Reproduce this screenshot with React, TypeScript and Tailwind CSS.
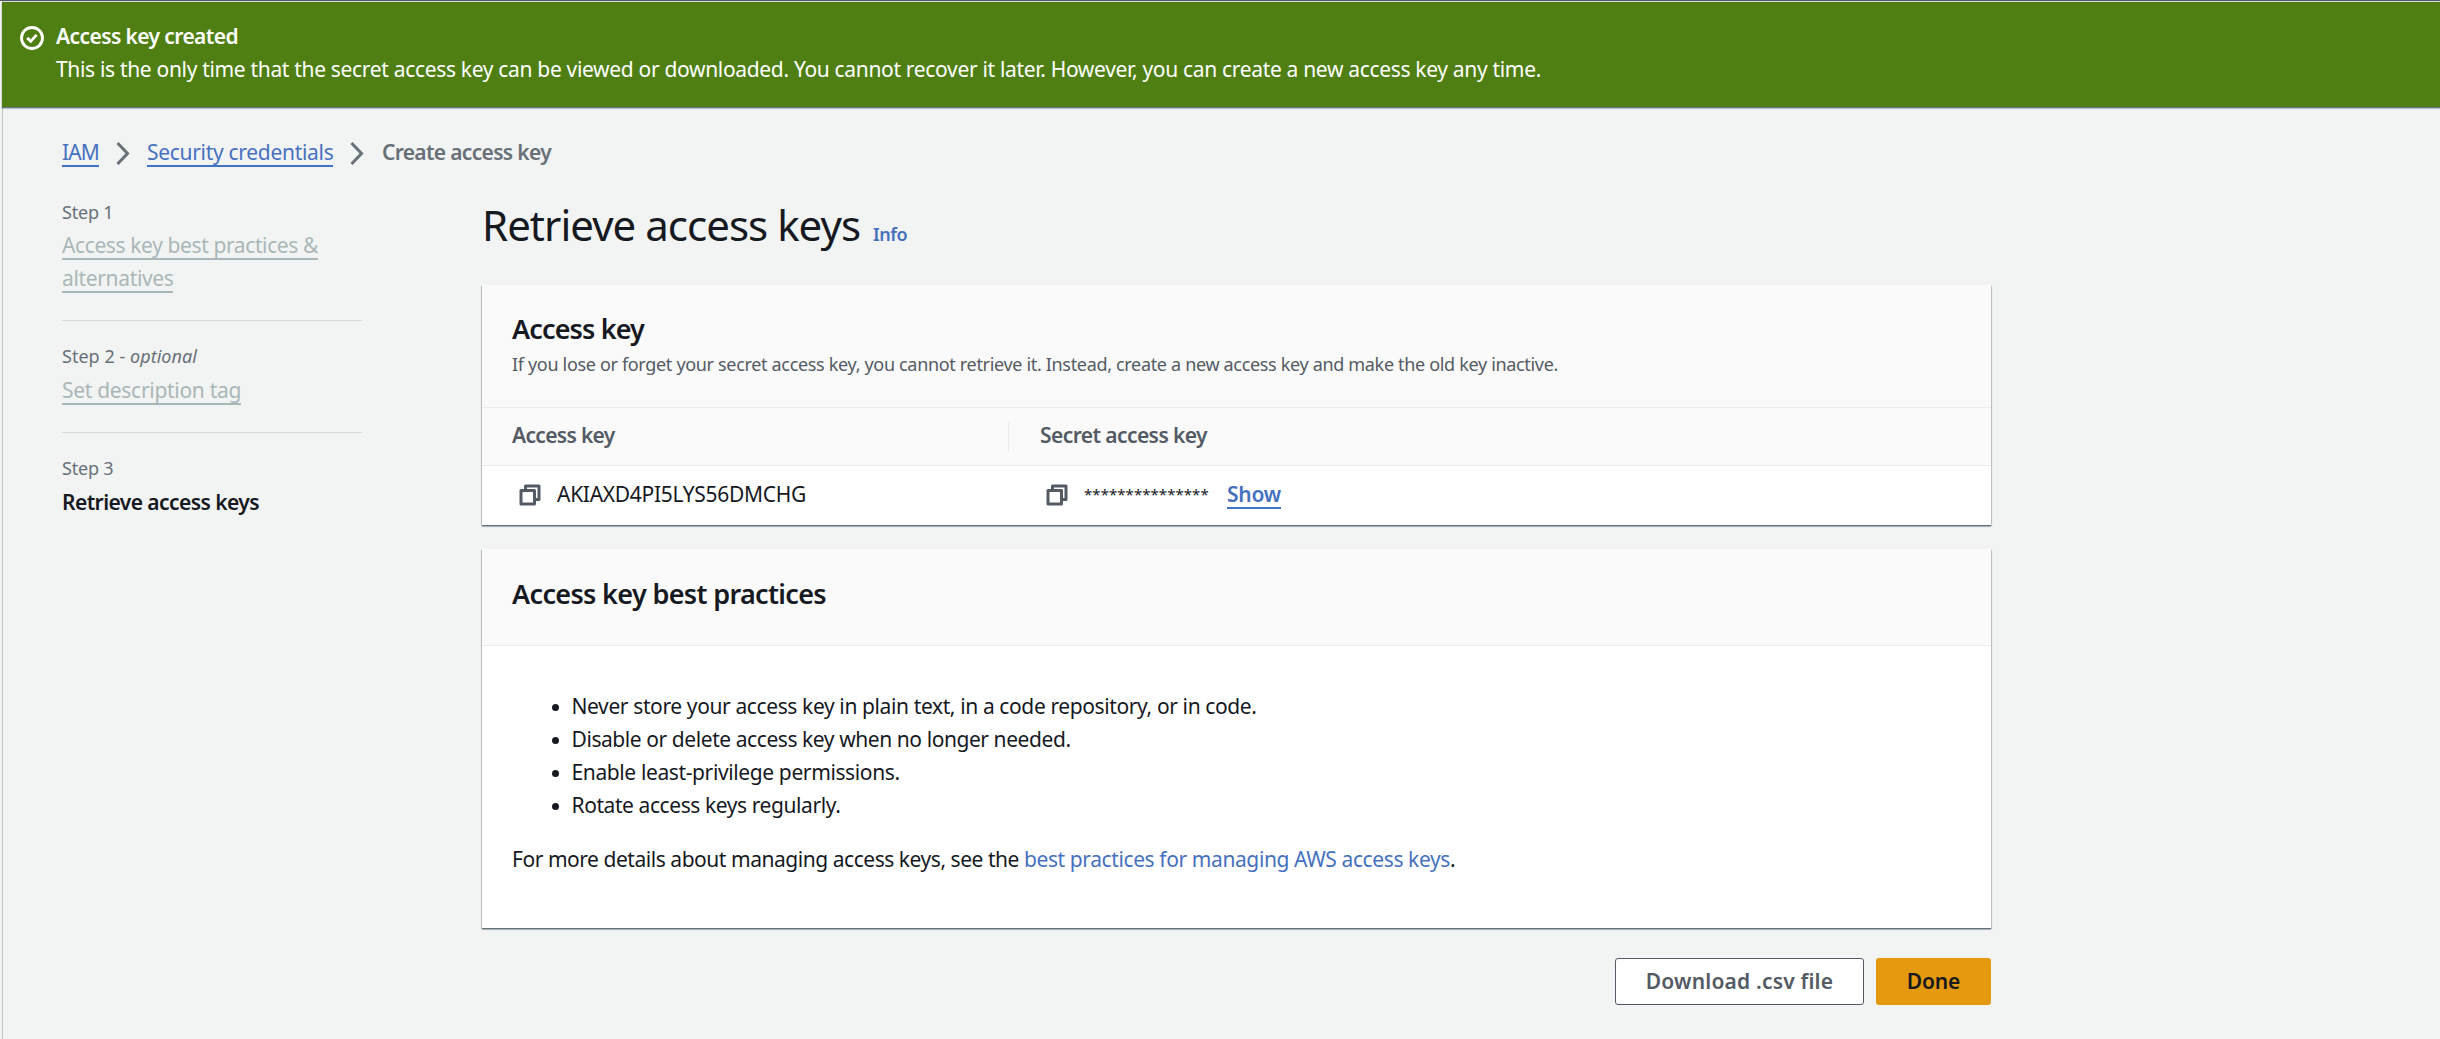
import React from "react";

function Chevron() {
  return (
    <svg className="h-6 w-[14px] shrink-0" viewBox="0 0 14 24" fill="none" stroke="#687078" strokeWidth="3">
      <path d="M1.5 2 L11.5 12.5 L1.5 23" />
    </svg>
  );
}

function CopyIcon() {
  return (
    <svg className="mt-px h-6 w-6 shrink-0" viewBox="0 0 16 16" fill="none" stroke="#545b64" strokeWidth="2" strokeLinejoin="round">
      <path d="M2 5h9v9H2z" />
      <path d="M5 5V2h9v9h-3" />
    </svg>
  );
}

function CheckIcon() {
  return (
    <svg className="mt-[6px] h-6 w-6 shrink-0" viewBox="0 0 16 16" fill="none" stroke="#ffffff" strokeWidth="1.9">
      <circle cx="8" cy="8" r="7" />
      <path d="m4.8 7.9 2.4 2.3 3.9-4.3" />
    </svg>
  );
}

const card =
  "w-[1509px] bg-white shadow-[0_1px_1px_0_rgba(0,28,36,0.3),1px_1px_1px_0_rgba(0,28,36,0.15),-1px_1px_1px_0_rgba(0,28,36,0.15),0_2px_1px_0_rgba(0,28,36,0.2)]";

const practices = [
  { text: "Never store your access key in plain text, in a code repository, or in code.", tracking: "tracking-[-0.385px]" },
  { text: "Disable or delete access key when no longer needed.", tracking: "tracking-[-0.43px]" },
  { text: "Enable least-privilege permissions.", tracking: "tracking-[-0.38px]" },
  { text: "Rotate access keys regularly.", tracking: "tracking-[-0.42px]" },
];

export default function App() {
  return (
    <div className="h-[1039px] w-[2440px] overflow-hidden whitespace-nowrap border-t border-[#545b64] bg-[#f2f3f3] pl-[2px] font-['Noto_Sans',sans-serif] text-[21px] leading-[33px] text-[#16191f]">
      <div className="h-full border-l border-t border-l-[#c4c7c8] border-t-[#d5dbdb]">
        <header className="-ml-px flex h-[105px] gap-[12px] bg-[#4f7f12] pl-[18px] pt-[18px] text-white shadow-[0_1px_1px_0_rgba(0,28,60,0.5),0_2px_1px_0_rgba(0,28,36,0.15)]">
          <CheckIcon />
          <div>
            <div className="font-semibold tracking-[-0.588px]">Access key created</div>
            <div className="tracking-[-0.323px]">
              This is the only time that the secret access key can be viewed or downloaded. You cannot recover it later. However, you can create a new access key any time.
            </div>
          </div>
        </header>

        <nav className="ml-[59px] mt-[29px] flex h-[33px] items-center">
          <a className="relative h-[33px] w-[37px] tracking-[-0.86px] text-[#4671bf] after:absolute after:inset-x-0 after:bottom-[2px] after:h-[2px] after:bg-[#4173c4]">IAM</a>
          <span className="ml-[17px] flex"><Chevron /></span>
          <a className="relative ml-[17px] h-[33px] w-[186px] tracking-[-0.3px] text-[#4671bf] after:absolute after:inset-x-0 after:bottom-[2px] after:h-[2px] after:bg-[#4173c4]">Security credentials</a>
          <span className="ml-[17px] flex"><Chevron /></span>
          <span className="ml-[18px] font-semibold tracking-[-0.675px] text-[#687078]">Create access key</span>
        </nav>

        <div className="ml-[59px] mt-[24px] flex">
          <aside className="w-[300px] pt-[3px]">
            <div className="h-[125px] border-b border-[#d5dbdb]">
              <div className="h-[33px] text-[18px] tracking-[-0.2px] text-[#687078]">Step 1</div>
              <div className="relative h-[33px] w-[256px] tracking-[-0.389px] text-[#aab7b8] after:absolute after:inset-x-0 after:bottom-[2px] after:h-[2px] after:bg-[#aab7b8]">Access key best practices &amp;</div>
              <div className="relative h-[33px] w-[111px] tracking-[-0.344px] text-[#aab7b8] after:absolute after:inset-x-0 after:bottom-[2px] after:h-[2px] after:bg-[#aab7b8]">alternatives</div>
            </div>
            <div className="h-[112px] border-b border-[#d5dbdb] pt-[19px]">
              <div className="h-[33px] text-[18px] tracking-[0.03px] text-[#687078]">Step 2 - <i>optional</i></div>
              <div className="relative mt-px h-[33px] w-[179px] tracking-[-0.302px] text-[#aab7b8] after:absolute after:inset-x-0 after:bottom-[2px] after:h-[2px] after:bg-[#aab7b8]">Set description tag</div>
            </div>
            <div className="pt-[19px]">
              <div className="h-[33px] text-[18px] tracking-[-0.2px] text-[#687078]">Step 3</div>
              <div className="mt-px font-semibold tracking-[-0.568px]">Retrieve access keys</div>
            </div>
          </aside>

          <main className="ml-[120px] w-[1509px]">
            <div className="flex h-[92px] items-baseline pt-[5px]">
              <h1 className="text-[42px] leading-[54px] tracking-[-0.97px]">Retrieve access keys</h1>
              <a className="ml-[13px] text-[18px] font-semibold tracking-[-0.48px] text-[#4671bf]">Info</a>
            </div>

            <section className={card}>
              <div className="h-[123px] border-b border-[#eaeded] bg-[#fafafa] pl-[30px] pt-[26px]">
                <h2 className="text-[27px] font-semibold leading-[36px] tracking-[-0.862px]">Access key</h2>
                <p className="mt-px text-[18px] leading-[33px] tracking-[-0.327px] text-[#545b64]">
                  If you lose or forget your secret access key, you cannot retrieve it. Instead, create a new access key and make the old key inactive.
                </p>
              </div>
              <div className="flex h-[58px] items-center border-b border-[#eaeded] bg-[#fafafa] pb-[2px] pl-[30px] font-semibold text-[#545b64]">
                <div className="w-[496px] tracking-[-0.68px]">Access key</div>
                <div className="mt-[2px] h-[30px] w-px bg-[#eaeded]" />
                <div className="ml-[31px] tracking-[-0.581px]">Secret access key</div>
              </div>
              <div className="flex h-[59px] items-center pb-[2px] pl-[36px]">
                <CopyIcon />
                <div className="ml-[15px] w-[488px] tracking-[-0.287px]">AKIAXD4PI5LYS56DMCHG</div>
                <CopyIcon />
                <div className="ml-[15px] w-[143px] text-[15px] tracking-[0.05px]">***************</div>
                <a className="relative h-[33px] w-[54px] font-semibold tracking-[-0.229px] text-[#4671bf] after:absolute after:inset-x-0 after:bottom-[2px] after:h-[2px] after:bg-[#4173c4]">Show</a>
              </div>
            </section>

            <section className={card + " mt-[24px]"}>
              <div className="h-[97px] border-b border-[#eaeded] bg-[#fafafa] pl-[30px] pt-[27px]">
                <h2 className="text-[27px] font-semibold leading-[36px] tracking-[-0.653px]">Access key best practices</h2>
              </div>
              <div className="h-[282px] pl-[30px] pt-[44px]">
                <ul className="pl-[36px]">
                  {practices.map((p) => (
                    <li key={p.text} className="flex items-center">
                      <span className="ml-[3.5px] mr-[12.5px] mt-[2px] size-[7.5px] rounded-full bg-[#16191f]" />
                      <span className={p.tracking}>{p.text}</span>
                    </li>
                  ))}
                </ul>
                <p className="mt-[21px] tracking-[-0.459px]">
                  For more details about managing access keys, see the <a className="tracking-[-0.4px] text-[#4671bf]">best practices for managing AWS access keys</a>.
                </p>
              </div>
            </section>

            <div className="mt-[30px] flex justify-end gap-[12px] font-semibold">
              <button className="h-[47px] w-[249px] rounded-[3px] border-[1.5px] border-[#545b64] bg-white tracking-[0.18px] text-[#545b64]">Download .csv file</button>
              <button className="h-[47px] w-[115px] rounded-[3px] bg-[#e4990f] tracking-[-0.1px]">Done</button>
            </div>
          </main>
        </div>
      </div>
    </div>
  );
}
